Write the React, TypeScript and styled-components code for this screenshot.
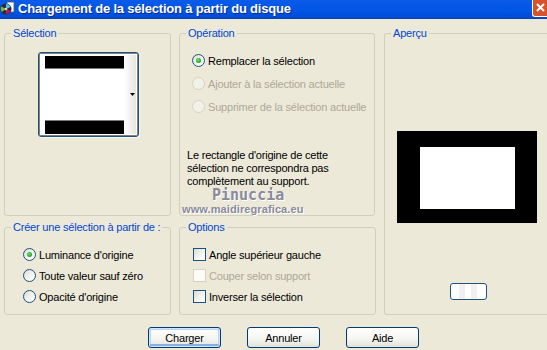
import React from "react";
import styled, { createGlobalStyle, css } from "styled-components";

const Global = createGlobalStyle`
  html, body { margin: 0; padding: 0; background: #ECE9D8; overflow: hidden; }
  body { font-family: "Liberation Sans", Arial, sans-serif; }
`;

const Window = styled.div`
  position: relative;
  width: 547px;
  height: 350px;
  overflow: hidden;
  background: #ECE9D8;
  font-family: "Liberation Sans", Arial, sans-serif;
  font-size: 11px;
  letter-spacing: -0.2px;
  color: #000;
`;

const TitleBar = styled.div`
  position: relative;
  height: 19px;
  display: flex;
  align-items: center;
  background: linear-gradient(to bottom, #0A5BE8 0%, #0055E5 60%, #004BD6 90%, #0042BC 100%);
  color: #fff;
`;

const TitleIcon = styled.svg`
  width: 15px;
  height: 15px;
  margin: 0 3px 2px 0;
  flex: none;
`;

const TitleText = styled.div`
  font-family: "Liberation Sans", Arial, sans-serif;
  font-weight: bold;
  font-size: 13px;
  letter-spacing: -0.2px;
  margin-top: -3px;
  text-shadow: 1px 1px 0 #0A2A8A;
`;

const CloseBtn = styled.div`
  position: absolute;
  top: 0;
  right: 0;
  z-index: 2;
  width: 15px;
  height: 17px;
  box-sizing: border-box;
  background-color: #D5522A;
  border-left: 1px solid #FFFFFF;
  border-bottom: 1px solid #FFFFFF;
  border-bottom-left-radius: 3px;
`;

const CloseX = styled.svg`
  display: block;
  width: 12px;
  height: 12px;
  margin: 2px 0 0 1px;
`;

const Body = styled.div`
  display: grid;
  grid-template-columns: 167px 197px 159px;
  grid-template-rows: 189px 94px;
  column-gap: 8px;
  row-gap: 5px;
  padding: 8px 0 0 4px;
  & > :nth-child(2) { margin-right: 1px; }
`;

const Group = styled.fieldset<{ $span?: boolean; $pt?: number; $open?: boolean }>`
  margin: 0;
  padding: ${(p) => p.$pt ?? 10}px 0 0 0;
  min-width: 0;
  border: 1px solid #D0D0BF;
  border-radius: 3px;
  box-sizing: border-box;
  display: flex;
  flex-direction: column;
  ${(p) => p.$span && css`grid-row: 1 / span 2; grid-column: 3;`}
  ${(p) => p.$open && css`border-right: 0; border-radius: 3px 0 0 3px; margin-right: -4px;`}
`;

const Legend = styled.legend`
  color: #0046D5;
  font-size: 11px;
  line-height: 13px;
  padding: 0 2px;
  margin-left: 6px;
  white-space: nowrap;
`;

const Thumb = styled.div`
  align-self: center;
  margin-top: 2px;
  margin-left: 2px;
  width: 101px;
  height: 85px;
  box-sizing: border-box;
  border: 1px solid #1C5180;
  border-radius: 3px;
  background: #fff;
  box-shadow: 1px 1px 0 #F7F6EF;
  overflow: hidden;
`;

const RadioList = styled.div<{ $ml: number; $row: number }>`
  display: flex;
  flex-direction: column;
  margin-left: ${(p) => p.$ml}px;
  & > * { height: ${(p) => p.$row}px; }
`;

const Row = styled.label<{ $disabled?: boolean }>`
  display: flex;
  align-items: center;
  gap: 3px;
  color: ${(p) => (p.$disabled ? "#ACA899" : "#000")};
  white-space: nowrap;
`;

const RadioCircle = styled.span<{ $checked?: boolean; $disabled?: boolean }>`
  width: 13px;
  height: 13px;
  box-sizing: border-box;
  border-radius: 50%;
  border: 1px solid ${(p) => (p.$disabled ? "#D5D2C2" : "#1C5180")};
  background: ${(p) =>
    p.$disabled
      ? "#F2F1E9"
      : "linear-gradient(135deg, #DCDCD7 0%, #F3F3EF 55%, #FFFFFF 100%)"};
  display: flex;
  align-items: center;
  justify-content: center;
  flex: none;
  &::after {
    content: "";
    display: ${(p) => (p.$checked ? "block" : "none")};
    width: 5px;
    height: 5px;
    border-radius: 50%;
    background: radial-gradient(circle at 40% 40%, #7BE07B 0%, #2BB52B 50%, #1A8E1A 100%);
  }
`;

const CheckBox = styled.span<{ $disabled?: boolean }>`
  width: 13px;
  height: 13px;
  box-sizing: border-box;
  border: 1px solid ${(p) => (p.$disabled ? "#D5D2C2" : "#1C5180")};
  background: ${(p) =>
    p.$disabled ? "#FBFBF8" : "linear-gradient(135deg, #DCDCD7 0%, #F3F3EF 55%, #FFFFFF 100%)"};
  flex: none;
`;

const Note = styled.p`
  margin: 31px 0 0 7px;
  line-height: 13px;
`;

const Preview = styled.div`
  margin-top: 91px;
  margin-left: 12px;
  width: 140px;
  height: 92px;
  box-sizing: border-box;
  background: #000;
  padding: 16px 22px 14px 23px;
`;

const PreviewInner = styled.div`
  width: 100%;
  height: 100%;
  background: #fff;
`;

const SmallBtn = styled.div`
  margin-top: 60px;
  margin-left: 65px;
  width: 37px;
  height: 17px;
  box-sizing: border-box;
  border: 1px solid #1C5180;
  border-radius: 3px;
  background:
    linear-gradient(90deg, transparent 0 8px, #F0F0F0 8px 14px, transparent 14px 20px, #F0F0F0 20px 26px, transparent 26px),
    #fff;
`;

const ButtonRow = styled.div`
  display: flex;
  gap: 26px;
  padding: 12px 0 0 148px;
`;

const Button = styled.button<{ $default?: boolean }>`
  width: 73px;
  height: 21px;
  padding: 0;
  font-family: "Liberation Sans", Arial, sans-serif;
  font-size: 11px;
  letter-spacing: -0.2px;
  color: #000;
  border: 1px solid #003C74;
  border-radius: 3px;
  background: linear-gradient(to bottom, #FFFFFF 0%, #F4F4F0 60%, #E3E1D6 100%);
  ${(p) =>
    p.$default &&
    css`
      box-shadow: inset 0 0 0 1px #CEE7FF, inset 0 -2px 0 1px #89ADE4, inset 0 0 0 2px #BCD4F6;
    `}
`;

const Watermark = styled.div<{ $big?: boolean }>`
  position: absolute;
  color: #8A8A9C;
  text-shadow: 1px 1px 0 #FFFFFF;
  letter-spacing: 0;
  ${(p) =>
    p.$big
      ? css`
          left: 212px;
          top: 186px;
          font-family: "DejaVu Sans Mono", monospace;
          font-weight: bold;
          font-size: 15px;
        `
      : css`
          left: 182px;
          top: 203px;
          font-family: "Liberation Sans", Arial, sans-serif;
          font-weight: bold;
          font-size: 11px;
          letter-spacing: 0.1px;
        `}
`;

const Radio = ({ label, checked, disabled }: { label: string; checked?: boolean; disabled?: boolean }) => (
  <Row $disabled={disabled}>
    <RadioCircle $checked={checked} $disabled={disabled} />
    {label}
  </Row>
);

const Check = ({ label, disabled }: { label: string; disabled?: boolean }) => (
  <Row $disabled={disabled}>
    <CheckBox $disabled={disabled} />
    {label}
  </Row>
);

export default function App() {
  return (
    <>
      <Global />
      <Window>
        <TitleBar>
          <TitleIcon viewBox="0 0 15 15">
            <rect x="7" y="1" width="7" height="10" fill="#fff" stroke="#555" strokeWidth="0.8" />
            <circle cx="6" cy="8" r="5.5" fill="#2B2B33" />
            <path d="M6 8 L6 3 A5 5 0 0 1 10.5 6 Z" fill="#4FC3F7" />
            <path d="M6 8 L10.5 10 A5 5 0 0 1 6 13 Z" fill="#C2185B" />
            <path d="M6 8 L2 11 A5 5 0 0 1 1.5 5.5 Z" fill="#7CB342" />
            <circle cx="6" cy="8" r="1.3" fill="#ddd" />
          </TitleIcon>
          <TitleText>Chargement de la sélection à partir du disque</TitleText>
          <CloseBtn>
            <CloseX viewBox="0 0 12 12">
              <path d="M3 2 L10 9 M10 2 L3 9" stroke="#fff" strokeWidth="2" />
            </CloseX>
          </CloseBtn>
        </TitleBar>
        <Body>
          <Group $pt={10}>
            <Legend>Sélection</Legend>
            <Thumb>
              <svg width="99" height="83" viewBox="0 0 99 83">
                <defs>
                  <linearGradient id="side" x1="0" x2="1" y1="0" y2="0">
                    <stop offset="0" stopColor="#FFFFFF" />
                    <stop offset="1" stopColor="#E6E5DE" />
                  </linearGradient>
                </defs>
                <rect x="85" y="2" width="12" height="79" fill="url(#side)" />
                <rect x="6" y="3" width="79" height="12" fill="#000" />
                <rect x="6" y="15" width="79" height="1" fill="#7A7A7A" />
                <rect x="6" y="67" width="79" height="1" fill="#7A7A7A" />
                <rect x="6" y="68" width="79" height="13" fill="#000" />
                <path d="M91 40 L96 40 L93.5 43 Z" fill="#000" />
                <rect x="0.5" y="0.5" width="98" height="82" fill="none" stroke="#000" strokeWidth="1" strokeDasharray="1 1" />
              </svg>
            </Thumb>
          </Group>
          <Group $pt={9}>
            <Legend>Opération</Legend>
            <RadioList $ml={12} $row={23}>
              <Radio label="Remplacer la sélection" checked />
              <Radio label="Ajouter à la sélection actuelle" disabled />
              <Radio label="Supprimer de la sélection actuelle" disabled />
            </RadioList>
            <Note>
              Le rectangle d'origine de cette
              <br />
              sélection ne correspondra pas
              <br />
              complètement au support.
            </Note>
          </Group>
          <Group $span $open $pt={0}>
            <Legend>Aperçu</Legend>
            <Preview>
              <PreviewInner />
            </Preview>
            <SmallBtn />
          </Group>
          <Group $pt={10}>
            <Legend>Créer une sélection à partir de :</Legend>
            <RadioList $ml={18} $row={21}>
              <Radio label="Luminance d'origine" checked />
              <Radio label="Toute valeur sauf zéro" />
              <Radio label="Opacité d'origine" />
            </RadioList>
          </Group>
          <Group $pt={10}>
            <Legend>Options</Legend>
            <RadioList $ml={13} $row={21}>
              <Check label="Angle supérieur gauche" />
              <Check label="Couper selon support" disabled />
              <Check label="Inverser la sélection" />
            </RadioList>
          </Group>
        </Body>
        <ButtonRow>
          <Button $default>Charger</Button>
          <Button>Annuler</Button>
          <Button>Aide</Button>
        </ButtonRow>
        <Watermark $big>Pinuccia</Watermark>
        <Watermark>www.maidiregrafica.eu</Watermark>
      </Window>
    </>
  );
}
